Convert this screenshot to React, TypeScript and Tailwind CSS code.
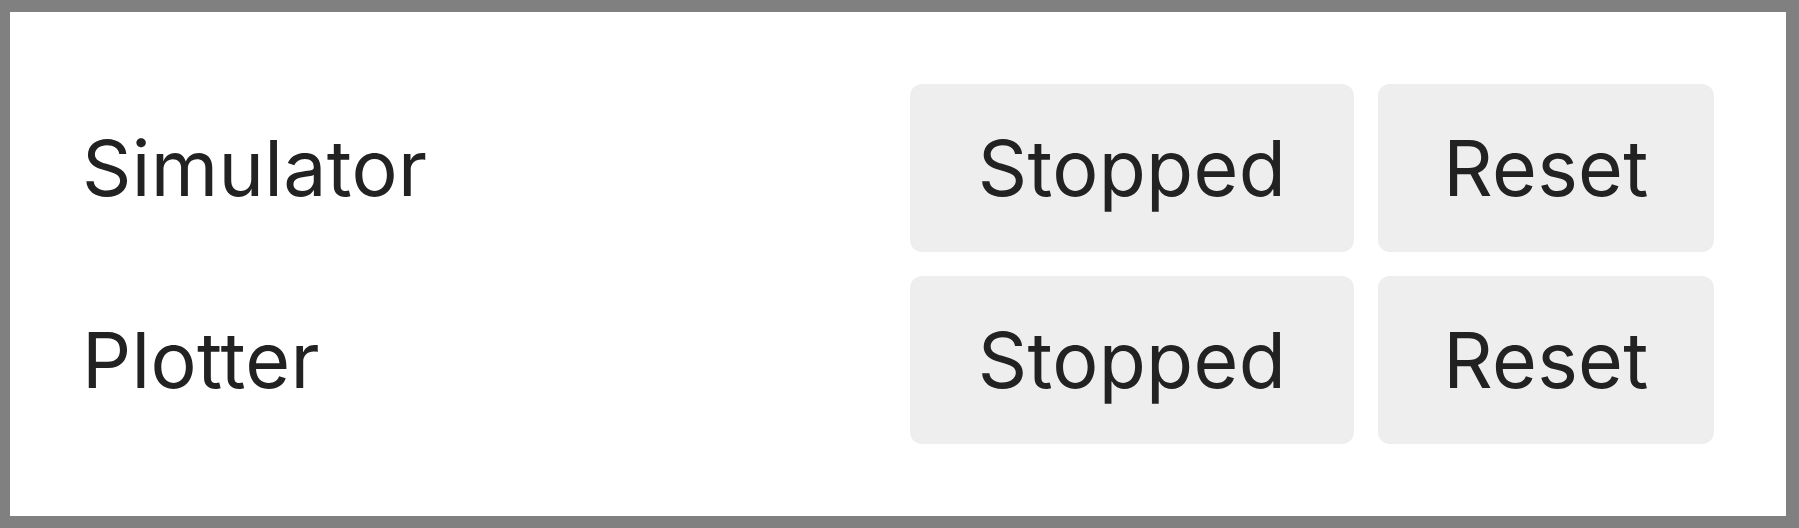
import React from "react";

function Row({ label }: { label: string }) {
  return (
    <div className="flex items-center gap-6">
      <div className="flex-1 text-[77px] leading-none tracking-[0.3px] text-[#222222]">{label}</div>
      <button className="h-[168px] w-[444px] rounded-xl bg-[#eeeeee] text-[77px] leading-none tracking-[0.3px] text-[#222222]">
        Stopped
      </button>
      <button className="h-[168px] w-[336px] rounded-xl bg-[#eeeeee] text-[77px] leading-none tracking-[0.3px] text-[#222222]">
        Reset
      </button>
    </div>
  );
}

export default function App() {
  return (
    <div
      className="h-[528px] w-[1799px] border-t-[12px] border-b-[12px] border-l-[10px] border-r-[13px] border-[#808080] bg-white"
      style={{ fontFamily: "Inter, 'Noto Sans', sans-serif" }}
    >
      <div className="flex flex-col gap-6 p-[72px]">
        <Row label="Simulator" />
        <Row label="Plotter" />
      </div>
    </div>
  );
}
